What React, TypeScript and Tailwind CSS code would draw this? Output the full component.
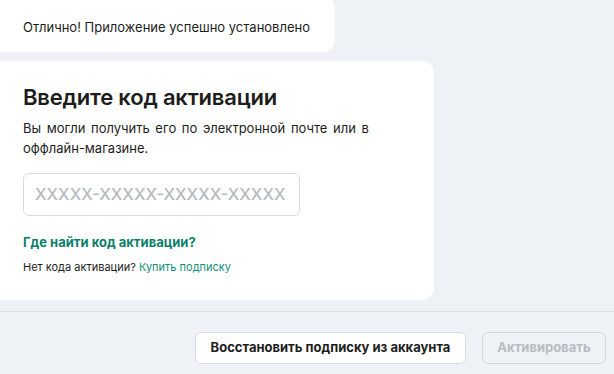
export default function App() {
  return (
    <div
      className="w-[614px] h-[374px] overflow-hidden bg-[#eef1f5] flex flex-col text-[#1d1d1b]"
      style={{ fontFamily: "Inter, 'Noto Sans', sans-serif" }}
    >
      <div className="flex-1 flex flex-col gap-[9px]">
        <div className="-mt-[4px] -ml-[12px] w-[347px] bg-white rounded-[12px] pl-[35px] pt-[21px] pb-[15px] text-[13px] leading-[20px]">
          Отлично! Приложение успешно установлено
        </div>
        <div className="-ml-[12px] w-[446px] h-[239px] bg-white rounded-[12px] pl-[35px] pr-[24px] pt-[21px] flex flex-col">
          <div className="text-[22px] leading-[30px] font-semibold tracking-[-0.2px]">
            Введите код активации
          </div>
          <div className="mt-[6px] text-[13px] leading-[20px] w-[370px] [word-spacing:2px]">
            Вы могли получить его по электронной почте или в оффлайн-магазине.
          </div>
          <div className="mt-[15px] w-[277px] h-[43px] rounded-[6px] border border-[#d9dcdf] flex items-center pl-[11px] text-[16.5px] font-medium text-[#b6b9be] whitespace-nowrap overflow-hidden">
            XXXXX-XXXXX-XXXXX-XXXXX
          </div>
          <div className="mt-[16px] text-[13px] leading-[20px] font-bold text-[#0b7f6b]">
            Где найти код активации?
          </div>
          <div className="mt-[7px] text-[11px] leading-[16px]">
            Нет кода активации? <span className="text-[#12907a]">Купить подписку</span>
          </div>
        </div>
      </div>
      <div className="h-[63px] border-t border-[#dcdfe4] flex items-start justify-end gap-[16px] pt-[20px] pr-[8px]">
        <button className="h-[32px] w-[271px] bg-white border border-[#d9dcdf] rounded-[6px] text-[13px] font-bold text-[#1d1d1b]">
          Восстановить подписку из аккаунта
        </button>
        <button className="h-[32px] w-[124px] border border-[#d4d7db] rounded-[6px] text-[13px] font-bold text-[#b9bcc1]">
          Активировать
        </button>
      </div>
    </div>
  );
}
